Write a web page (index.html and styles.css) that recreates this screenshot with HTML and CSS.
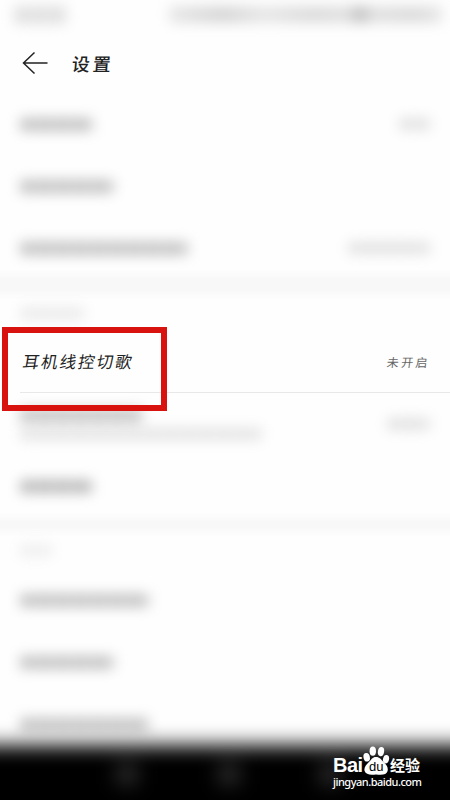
FILE: index.html
```html
<!DOCTYPE html>
<html lang="zh-CN">
<head>
  <meta charset="UTF-8" />
  <title>设置</title>
  <link rel="stylesheet" href="styles.css">
</head>
<body>
  <div class="phone">
    <div class="status-bar">
      <span class="blur status-left"></span>
      <span class="blur status-right"></span>
    </div>

    <header class="header">
      <svg class="back" width="26" height="24" viewBox="0 0 26 24" fill="none" stroke="#222" stroke-width="1.5">
        <path d="M12.5 1.5 L1.5 12 L12.5 22.5 M1.5 12 H25.5" />
      </svg>
      <h1>设置</h1>
    </header>

    <main>
      <div class="row"><span class="blur w4"></span><span class="blur value v2"></span></div>
      <div class="row"><span class="blur w5"></span></div>
      <div class="row"><span class="blur w9"></span><span class="blur value v5"></span></div>

      <div class="band band-first"></div>
      <div class="section section-first"><span class="blur label l4"></span></div>

      <div class="row active">
        <span class="name">耳机线控切歌</span>
        <span class="state">未开启</span>
        <div class="red-box"></div>
      </div>
      <div class="row">
        <div class="two-lines">
          <span class="blur w6"></span>
          <span class="blur desc"></span>
        </div>
        <span class="blur value v3"></span>
      </div>
      <div class="row"><span class="blur w4 dark"></span></div>

      <div class="band"></div>
      <div class="section"><span class="blur label l2"></span></div>

      <div class="row"><span class="blur w7"></span></div>
      <div class="row"><span class="blur w5"></span></div>
      <div class="row"><span class="blur w7"></span></div>
    </main>

    <!-- Android navigation keys -->
    <nav class="nav">
      <span class="key"></span>
      <span class="key"></span>
      <span class="key"></span>
    </nav>

    <div class="watermark">
      <div class="brand">
        <span class="bai">Bai</span>
        <div class="paw">
          <svg width="28" height="29" viewBox="0 0 28 29" fill="#fff">
            <ellipse cx="4.7" cy="11.3" rx="3.2" ry="4.3" transform="rotate(-12 4.7 11.3)" />
            <ellipse cx="10.8" cy="5.2" rx="3.2" ry="4.6" />
            <ellipse cx="19" cy="5.6" rx="3.1" ry="4.6" transform="rotate(10 19 5.6)" />
            <ellipse cx="24" cy="13.2" rx="3" ry="4.2" transform="rotate(14 24 13.2)" />
            <path d="M14 11 C17.8 11 19 13.6 21.5 16 C24.5 18.8 26.4 21.3 25.6 25 C24.5 28.8 20.5 29 14 28.4 C8 29 3.8 28.6 2.6 25 C1.6 21.6 4.2 18.4 7 16 C9.7 13.6 10.2 11 14 11 Z" />
          </svg>
          <span class="du">du</span>
        </div>
        <span class="jingyan">经验</span>
      </div>
      <div class="url">jingyan.baidu.com</div>
    </div>
  </div>
</body>
</html>
```
FILE: styles.css
```css
* {
  margin: 0;
  padding: 0;
  box-sizing: border-box;
}

body {
  font-family: "Noto Sans CJK SC", "Noto Sans", sans-serif;
  background-color: #fefefe;
}

.phone {
  position: relative;
  width: 450px;
  height: 800px;
  overflow: hidden;
}

/* Smudged text: one soft block per character */
.blur {
  display: block;
  height: 13px;
  border-radius: 4px;
  background: repeating-linear-gradient(90deg, #999 0, #888 9px, #b4b4b4 16px, #999 18px);
  filter: blur(6.5px);
  opacity: 0.58;
}

.status-bar {
  height: 32px;
  padding: 6px 8px 0 14px;
  display: flex;
  justify-content: space-between;
}

.status-left {
  width: 53px;
  height: 18px;
  opacity: 0.28;
}

.status-right {
  width: 273px;
  height: 17px;
  opacity: 0.34;
  background: linear-gradient(90deg, #bbb, #888 20%, #bbb 35%, #999 53%, #aaa 65%, #444 70%, #aaa 75%, #999 90%, #bbb);
}

.header {
  height: 61px;
  padding-left: 22px;
  display: flex;
  align-items: center;
}

.back {
  display: block;
}

h1 {
  margin-left: 24px;
  font-size: 18px;
  font-weight: 500;
  line-height: 28px;
  letter-spacing: 3px;
  color: #222;
  transform: skewX(-5deg);
}

.row {
  position: relative;
  height: 62px;
  padding: 0 20px;
  display: flex;
  align-items: center;
  justify-content: space-between;
}

.w4 { width: 73px; }
.w5 { width: 94px; }
.w6 { width: 122px; }
.w7 { width: 129px; }
.w9 { width: 168px; }
.dark { opacity: 0.66; }

.value {
  height: 12px;
  opacity: 0.28;
}

.v2 { width: 31px; }
.v3 { width: 43px; }
.v5 { width: 82px; }

.band {
  height: 15px;
  margin: 0 -10px;
  background-color: #f8f8f8;
  filter: blur(3px);
}

.band-first {
  height: 21px;
  margin-top: -5px;
}

.section {
  height: 37px;
  padding: 12px 20px 0;
}

.section-first {
  height: 36px;
}

.label {
  height: 13px;
  opacity: 0.18;
}

.l4 { width: 64px; }
.l2 { width: 32px; opacity: 0.14; }

.active {
  background-color: #fefefe;
}

.active::after {
  content: "";
  position: absolute;
  left: 20px;
  right: 0;
  bottom: 0;
  height: 1px;
  background-color: #e8e8e8;
}

.name {
  font-size: 16.5px;
  letter-spacing: 2px;
  color: #222;
  margin-left: 3px;
  margin-top: -2px;
  transform: skewX(-10deg);
}

.state {
  font-size: 12px;
  letter-spacing: 2.4px;
  color: #666;
  margin-top: -2px;
  transform: skewX(-7deg);
}

.red-box {
  position: absolute;
  left: 2px;
  top: -4px;
  width: 165px;
  height: 84px;
  border: 6px solid #d8120e;
  z-index: 2;
}

.two-lines {
  display: flex;
  flex-direction: column;
  gap: 6px;
}

.desc {
  width: 242px;
  height: 12px;
  opacity: 0.25;
}

.nav {
  position: absolute;
  left: -40px;
  right: -40px;
  top: 745px;
  height: 110px;
  padding: 19px 150px 0 157px;
  display: flex;
  justify-content: space-between;
  background-color: #000;
  filter: blur(10px);
}

.key {
  width: 20px;
  height: 20px;
  background-color: #333;
}

.watermark {
  position: absolute;
  left: 333px;
  top: 746px;
  color: #fff;
}

.brand {
  height: 29px;
  display: flex;
  align-items: flex-end;
}

.bai {
  width: 29px;
  font: bold 20px/19px "Liberation Sans", sans-serif;
  letter-spacing: -0.5px;
}

.paw {
  position: relative;
  flex: none;
  height: 29px;
  width: 28px;
}

.du {
  position: absolute;
  left: 7px;
  top: 14px;
  font: 13px/13px "Liberation Sans", sans-serif;
  color: #000;
}

.jingyan {
  font-size: 15px;
  font-weight: 700;
  line-height: 17px;
  margin-bottom: 2px;
}

.url {
  font: 500 11px/13px "Noto Sans", sans-serif;
  letter-spacing: -0.5px;
  white-space: nowrap;
}
```
